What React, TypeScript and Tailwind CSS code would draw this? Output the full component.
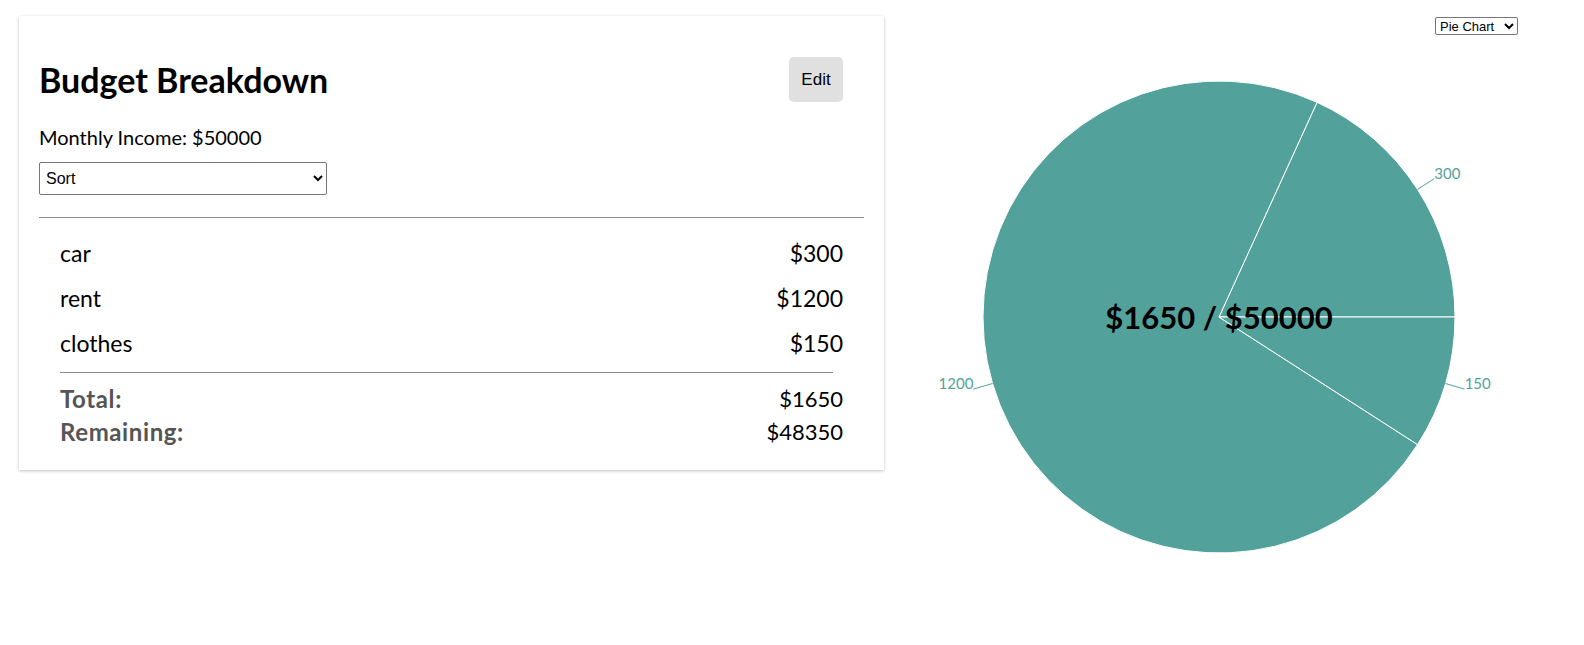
const items = [
  { name: 'car', amount: 300 },
  { name: 'rent', amount: 1200 },
  { name: 'clothes', amount: 150 },
];

const income = 50000;
const FILL = '#52a29b';

// pie geometry (svg coords)
const CX = 335;
const CY = 282;
const R = 236;

function polar(r: number, deg: number) {
  const rad = (deg * Math.PI) / 180;
  return { x: CX + r * Math.cos(rad), y: CY - r * Math.sin(rad) };
}

function PieChart() {
  const total = items.reduce((s, i) => s + i.amount, 0);
  let start = 0;
  const slices = items.map(item => {
    const span = (item.amount / total) * 360;
    const end = start + span;
    const a = polar(R, start);
    const b = polar(R, end);
    const mid = start + span / 2;
    const p1 = polar(R, mid);
    const p2 = polar(R + 20, mid);
    const d = `M${CX},${CY} L${a.x},${a.y} A${R},${R} 0 ${span > 180 ? 1 : 0} 0 ${b.x},${b.y} Z`;
    start = end;
    return { item, d, p1, p2, anchor: p2.x > CX ? 'start' : 'end' };
  });

  return (
    <svg width={700} height={600} className="block">
      {slices.map(s => (
        <path key={s.item.name} d={s.d} fill={FILL} stroke="#fff" strokeWidth={1} />
      ))}
      {slices.map(s => (
        <g key={s.item.name + '-label'}>
          <path d={`M${s.p1.x},${s.p1.y} L${s.p2.x},${s.p2.y}`} stroke={FILL} fill="none" />
          <text
            x={s.p2.x}
            y={s.p2.y}
            textAnchor={s.anchor as 'start' | 'end'}
            fill={FILL}
            fontSize={15}
            fontFamily="Lato, sans-serif"
          >
            {s.item.amount}
          </text>
        </g>
      ))}
      <text
        x={CX}
        y={CY}
        textAnchor="middle"
        dominantBaseline="central"
        fontSize={31}
        fontWeight={700}
        fontFamily="Lato, sans-serif"
        fill="#000"
      >
        ${total} / ${income}
      </text>
    </svg>
  );
}

export default function App() {
  const total = items.reduce((s, i) => s + i.amount, 0);

  return (
    <div className="flex items-start w-full min-h-[645px] bg-white text-black font-['Lato',sans-serif]">
      <div className="ml-[19px] mt-[16px] w-[865px] shrink-0 bg-white px-[20px] pt-[41px] pb-[22px] shadow-[0_1px_3px_rgba(0,0,0,0.25)]">
        <div className="flex items-center justify-between h-[45px] pr-[21px]">
          <h1 className="text-[34px] font-bold leading-none">Budget Breakdown</h1>
          <button
            type="button"
            className="w-[54px] h-[45px] rounded-[5px] bg-[#e0e0e0] font-['Liberation_Sans',Arial,sans-serif] text-[17px] text-black"
          >
            Edit
          </button>
        </div>

        <p className="mt-[23px] text-[20px] leading-[24px]">Monthly Income: ${income}</p>

        <select className="mt-[13px] block w-[288px] h-[33px] px-[2px] border border-[#767676] rounded-[2px] bg-white font-['Liberation_Sans',Arial,sans-serif] text-[16px] text-black">
          <option>Sort</option>
        </select>

        <div className="mt-[22px] border-t border-[#8c8c8c]" />

        <ul className="mt-[13px] px-[21px]">
          {items.map(item => (
            <li key={item.name} className="flex justify-between h-[45px] leading-[45px] text-[23px]">
              <span>{item.name}</span>
              <span>${item.amount}</span>
            </li>
          ))}
        </ul>

        <div className="mt-[6px] ml-[21px] mr-[31px] border-t border-[#8c8c8c]" />

        <div className="mt-[9px] px-[21px] text-[22px] leading-[33px]">
          <div className="flex justify-between">
            <span className="font-bold text-[#555] text-[24px] tracking-[0.6px]">Total:</span>
            <span>${total}</span>
          </div>
          <div className="flex justify-between">
            <span className="font-bold text-[#555] text-[24px] tracking-[0.6px]">Remaining:</span>
            <span>${income - total}</span>
          </div>
        </div>
      </div>

      <div className="flex-1 flex flex-col">
        <select className="self-end mt-[17px] mr-[66px] w-[83px] h-[18px] border border-[#767676] rounded-[2px] bg-white font-['Liberation_Sans',Arial,sans-serif] text-[13px] text-black">
          <option>Pie Chart</option>
        </select>
        <PieChart />
      </div>
    </div>
  );
}
